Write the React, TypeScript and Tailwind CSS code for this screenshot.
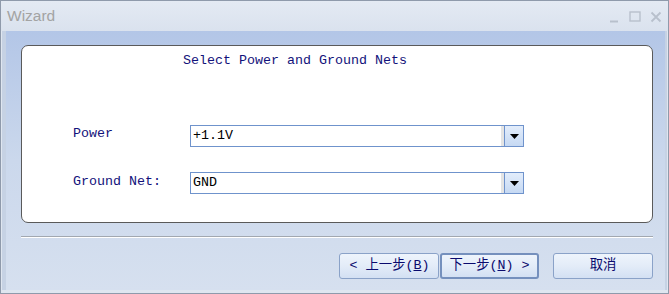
import React from "react";

const mono = { fontFamily: '"Liberation Mono", "Noto Sans CJK SC", monospace' };

function Combo({ value }: { value: string }) {
  return (
    <div className="flex h-[22px] w-[334px] border border-[#6f93cc] bg-white">
      <div className="flex flex-1 items-center pl-[2px] text-[13.33px] text-black" style={mono}>
        {value}
      </div>
      <div className="w-[3px] bg-[#e4e4e4]" />
      <div className="flex w-[19px] items-center justify-center border-l border-[#6f93cc] bg-gradient-to-b from-[#e3edfb] to-[#c6d9f3]">
        <svg width="9" height="5" viewBox="0 0 9 5">
          <path d="M0 0h9L4.5 5z" fill="#000" />
        </svg>
      </div>
    </div>
  );
}

function Btn({ children, focused }: { children: React.ReactNode; focused?: boolean }) {
  return (
    <div
      className={
        "flex h-[26px] items-center justify-center rounded-[3px] bg-gradient-to-b from-[#eef4fc] via-[#e3ecf8] to-[#d3e0f3] text-[13.33px] text-[#0a0a6e] " +
        (focused ? "border-2 border-[#7590bd]" : "border border-[#8aa2c8]")
      }
      style={mono}
    >
      {children}
    </div>
  );
}

export default function App() {
  return (
    <div className="flex h-[294px] w-[669px] flex-col border border-[#8f9aab] bg-[#dfe6f0]" style={{ fontFamily: '"Liberation Sans", Arial, sans-serif' }}>
      <div className="flex h-[30px] items-center justify-between bg-gradient-to-b from-[#e4eaf3] to-[#dae2ee] pl-[6px] pr-[6px]">
        <span className="text-[15.5px] text-[#a3a3a3]">Wizard</span>
        <div className="flex items-center gap-[9px] pt-[2px] text-[#b4bccb]">
          <svg width="11" height="11" viewBox="0 0 11 11">
            <path d="M1 9.5h8" stroke="#b8c0cc" strokeWidth="2" />
          </svg>
          <svg width="12" height="12" viewBox="0 0 12 12">
            <rect x="1" y="1" width="10" height="9" fill="none" stroke="#b8c0cc" strokeWidth="1.4" />
          </svg>
          <svg width="12" height="12" viewBox="0 0 12 12">
            <path d="M1.5 1.5l9 9M10.5 1.5l-9 9" stroke="#b8c0cc" strokeWidth="1.8" />
          </svg>
        </div>
      </div>
      <div className="mx-[1px] mb-[3px] flex flex-1 flex-col border-l-[4px] border-r-[2px] border-[#c6d2e4] bg-gradient-to-b from-[#b3c6e7] via-[#cbd8ec] to-[#d6e0ef] pl-[15px] pr-[12px] pt-[14px]">
        <div className="flex h-[178px] flex-col rounded-[7px] border border-[#5a5a5a] bg-white">
          <div className="pl-[161px] pt-[7px] text-[13.33px] leading-[16px] text-[#12127a]" style={mono}>
            Select Power and Ground Nets
          </div>
          <div className="mt-[56px] flex flex-col gap-[25px] pl-[51px]">
            <div className="flex items-center">
              <div className="-mt-[4px] w-[117px] text-[13.33px] text-[#12127a]" style={mono}>Power</div>
              <Combo value="+1.1V" />
            </div>
            <div className="flex items-center">
              <div className="-mt-[2px] w-[117px] text-[13.33px] text-[#12127a]" style={mono}>Ground Net:</div>
              <Combo value="GND" />
            </div>
          </div>
        </div>
        <div className="mt-[13px] h-[1px] bg-[#a2a8b0]" />
        <div className="h-[1px] bg-white" />
        <div className="mt-[15px] flex justify-end">
          <div className="w-[100px]">
            <Btn>
              <span className="pl-[1px]">&lt; 上一步(<u>B</u>)</span>
            </Btn>
          </div>
          <div className="ml-[1px] w-[99px]">
            <Btn focused>
              <span>下一步(<u>N</u>) &gt;</span>
            </Btn>
          </div>
          <div className="ml-[14px] w-[100px]">
            <Btn>取消</Btn>
          </div>
        </div>
      </div>
    </div>
  );
}
